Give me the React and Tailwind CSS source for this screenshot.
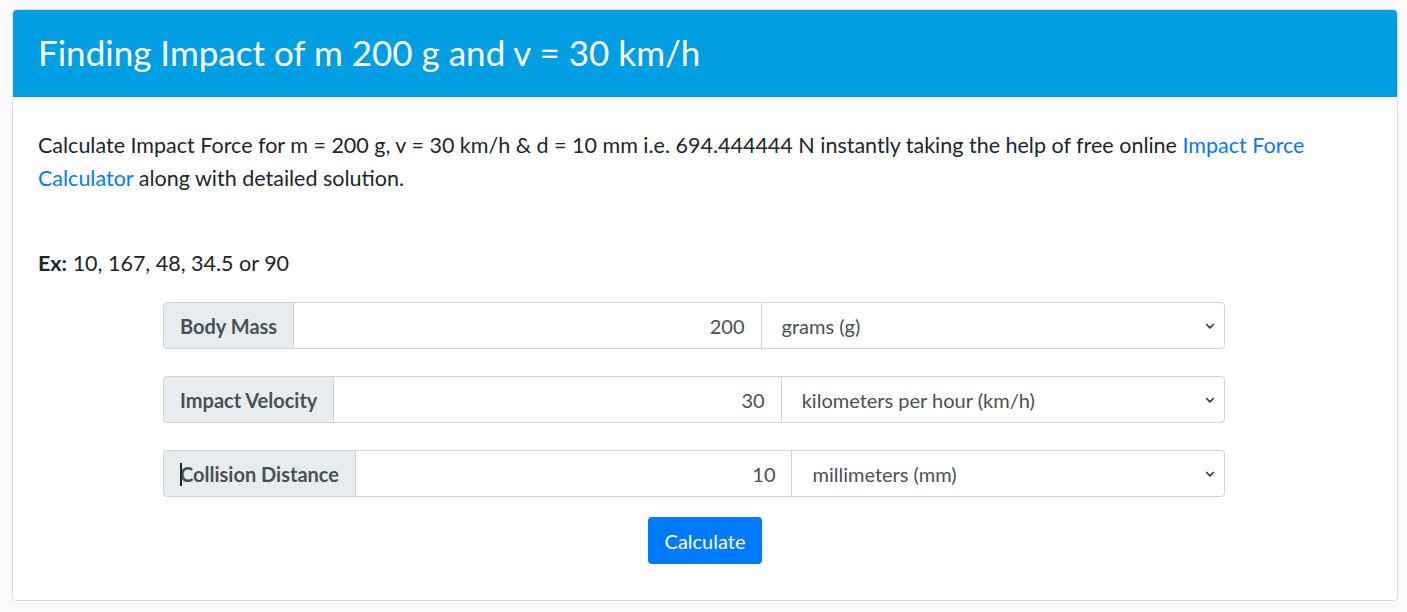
import React from 'react';

const rows = [
  { label: 'Body Mass', value: '200', unit: 'grams (g)' },
  { label: 'Impact Velocity', value: '30', unit: 'kilometers per hour (km/h)' },
  { label: 'Collision Distance', value: '10', unit: 'millimeters (mm)', caret: true },
];

const Chevron = () => (
  <svg width="12" height="12" viewBox="0 0 16 16" className="shrink-0">
    <path d="M3.5 6l4.5 4.5 4.5-4.5" fill="none" stroke="#343a40" strokeWidth="2.2" strokeLinecap="round" strokeLinejoin="round" />
  </svg>
);

export default function App() {
  return (
    <div className="min-h-[612px] bg-[#fafafa] px-[12px] pt-[9px] font-['Lato','Liberation_Sans',sans-serif] text-[#212529]">
      <div className="w-[1386px] rounded-[4px] border border-[#dcdcdc] bg-white">
        <div className="flex h-[87px] items-center rounded-t-[4px] bg-[#009fe3] px-[25px] pb-[3px]">
          <h1 className="text-[35px] leading-none text-white">Finding Impact of m 200 g and v = 30 km/h</h1>
        </div>
        <div className="px-[25px] pt-[32px] pb-[36px]">
          <p className="text-[21.5px] leading-[33px]">
            Calculate Impact Force for m = 200 g, v = 30 km/h &amp; d = 10 mm i.e. 694.444444 N instantly taking the help of free online{' '}
            <a className="text-[#007bff]">Impact Force Calculator</a> along with detailed solution.
          </p>
          <p className="mt-[52px] text-[21.5px] leading-[33px]">
            <b>Ex:</b> 10, 167, 48, 34.5 or 90
          </p>
          <div className="ml-[125px] mt-[22px] flex w-[1062px] flex-col gap-[27px]">
            {rows.map((r) => (
              <div key={r.label} className="flex h-[47px] text-[20px] text-[#495057]">
                <div className="relative flex items-center rounded-l-[4px] border border-[#ced4da] bg-[#e9ecef] px-[16px] font-bold">
                  {r.caret && <span className="absolute left-[16px] top-[12px] h-[23px] w-[2px] bg-[#212529]" />}
                  {r.label}
                </div>
                <div className="flex flex-1 items-center justify-end border-y border-[#ced4da] px-[16px]">
                  {r.value}
                </div>
                <div className="flex flex-1 items-center justify-between rounded-r-[4px] border border-[#ced4da] pl-[20px] pr-[8px]">
                  <span>{r.unit}</span>
                  <Chevron />
                </div>
              </div>
            ))}
          </div>
          <div className="mt-[20px] flex justify-center">
            <button className="h-[47px] rounded-[4px] bg-[#007bff] px-[17px] text-[20px] text-white">Calculate</button>
          </div>
        </div>
      </div>
    </div>
  );
}
